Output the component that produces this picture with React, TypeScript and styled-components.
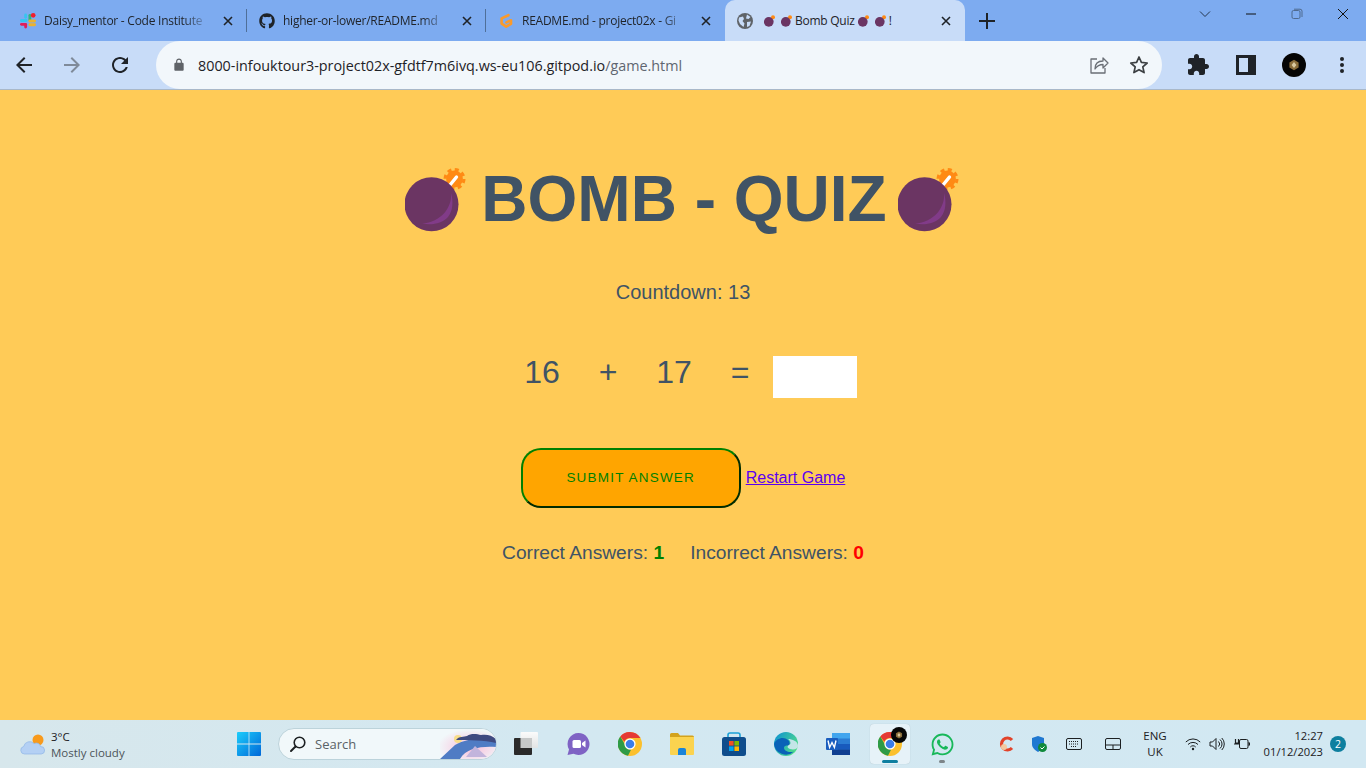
import React from 'react';
import styled, { createGlobalStyle } from 'styled-components';
import { FaGithub, FaWhatsapp } from 'react-icons/fa';

const GlobalStyle = createGlobalStyle`
  html, body { margin: 0; padding: 0; height: 100%; overflow: hidden; }
  body { font-family: "Liberation Sans", Arial, sans-serif; background: #ffcb57; }
  * { box-sizing: border-box; }
`;

const uiFont = `"Open Sans", "Noto Sans", sans-serif`;

const Screen = styled.div`
  width: 1366px;
  height: 768px;
  display: flex;
  flex-direction: column;
`;

/* ---------- chrome: tabs ---------- */
const TabStrip = styled.div`
  height: 41px;
  background: #7dabf0;
  display: flex;
  padding-left: 8px;
  flex-shrink: 0;
`;

const Tab = styled.div<{ $active?: boolean; $divider?: boolean }>`
  width: ${(p) => (p.$active ? '240px' : '239px')};
  height: 41px;
  display: flex;
  align-items: center;
  padding: 0 11px 0 12px;
  gap: 8px;
  position: relative;
  background: ${(p) => (p.$active ? '#c8dcf8' : 'transparent')};
  border-radius: ${(p) => (p.$active ? '10px 10px 0 0' : '0')};
  &::after {
    content: '';
    display: ${(p) => (p.$divider ? 'block' : 'none')};
    position: absolute;
    right: 0;
    top: 9px;
    height: 23px;
    width: 1px;
    background: #4f6f99;
  }
`;

const TabTitle = styled.span<{ $fade?: boolean }>`
  flex: 1;
  font: 12px ${uiFont};
  letter-spacing: -0.25px;
  color: #1f2328;
  white-space: nowrap;
  overflow: hidden;
  display: flex;
  align-items: center;
  ${(p) =>
    p.$fade
      ? `-webkit-mask-image: linear-gradient(90deg, #000 84%, transparent 100%);
         mask-image: linear-gradient(90deg, #000 84%, transparent 100%);`
      : ''}
`;

const TabClose = styled.svg`
  width: 16px;
  height: 16px;
  flex-shrink: 0;
  margin-left: 2px;
`;

const GhostBomb = styled.svg`
  width: 11px;
  height: 12px;
  margin: 0 3px;
  flex-shrink: 0;
`;

const NewTab = styled.div`
  width: 44px;
  height: 41px;
  display: flex;
  align-items: center;
  justify-content: center;
`;

const WindowControls = styled.div`
  margin-left: auto;
  display: flex;
  height: 28px;
`;

const WindowButton = styled.div`
  width: 46px;
  height: 28px;
  display: flex;
  align-items: center;
  justify-content: center;
`;

/* ---------- chrome: toolbar ---------- */
const Toolbar = styled.div`
  height: 49px;
  background: #c8dcf8;
  display: flex;
  align-items: flex-start;
  border-bottom: 1px solid #a9b8c9;
  flex-shrink: 0;
`;

const ToolButton = styled.div`
  width: 48px;
  height: 48px;
  display: flex;
  align-items: center;
  justify-content: center;
  flex-shrink: 0;
`;

const AddressBar = styled.div`
  width: 1006px;
  height: 48px;
  margin: 0 12px;
  background: #f2f7fb;
  border-radius: 24px;
  display: flex;
  align-items: center;
  padding: 0 3px 0 16px;
`;

const Url = styled.div`
  flex: 1;
  margin-left: 12px;
  font: 14.35px ${uiFont};
  color: #1e2227;
  white-space: nowrap;
  span { color: #5f6670; }
`;

const AddressAction = styled.div`
  width: 40px;
  height: 40px;
  display: flex;
  align-items: center;
  justify-content: center;
`;

const Avatar = styled.div`
  width: 24px;
  height: 24px;
  border-radius: 50%;
  background: #050505;
  display: flex;
  align-items: center;
  justify-content: center;
`;

/* ---------- page ---------- */
const Page = styled.main`
  flex: 1;
  background: #ffcb57;
  color: #405365;
  display: flex;
  flex-direction: column;
  align-items: center;
  padding-top: 72px;
`;

const Title = styled.h1`
  margin: 0;
  height: 74px;
  padding-right: 2px;
  font-size: 64px;
  line-height: 74px;
  font-weight: 700;
  display: flex;
  align-items: center;
  white-space: nowrap;
`;

const TitleText = styled.span`
  margin: 0 11px 0 15px;
`;

const Countdown = styled.div`
  margin-top: 44px;
  font-size: 20px;
  line-height: 24px;
`;

const Equation = styled.div`
  margin-top: 52px;
  display: flex;
  align-items: flex-start;
`;

const Term = styled.div`
  width: 66px;
  font-size: 32px;
  line-height: 32px;
  text-align: center;
`;

const AnswerInput = styled.input`
  width: 84px;
  height: 42px;
  border: 0;
  padding: 0;
  background: #fff;
  outline: none;
`;

const Actions = styled.div`
  margin-top: 50px;
  display: flex;
  align-items: center;
  gap: 5px;
`;

const SubmitButton = styled.button`
  width: 220px;
  height: 60px;
  padding: 0 0 2px;
  background: orange;
  color: green;
  border: 2px outset green;
  border-radius: 20px;
  font: 13.5px "Liberation Sans", Arial, sans-serif;
  letter-spacing: 1.2px;
  text-transform: uppercase;
`;

const RestartLink = styled.a`
  font-size: 16px;
  color: #5a00f0;
  text-decoration: underline;
`;

const Score = styled.div`
  margin-top: 34px;
  display: flex;
  gap: 26px;
  font-size: 19.2px;
  line-height: 22px;
`;

const ScoreValue = styled.b<{ $tone: string }>`
  color: ${(p) => p.$tone};
`;

/* ---------- taskbar ---------- */
const Taskbar = styled.footer`
  height: 48px;
  flex-shrink: 0;
  background: linear-gradient(90deg, #d7e7ec 0%, #d3e8f1 40%, #d2e8f2 100%);
  display: flex;
  align-items: center;
`;

const Weather = styled.div`
  width: 223px;
  padding-left: 20px;
  display: flex;
  align-items: center;
  gap: 6px;
`;

const WeatherText = styled.div`
  padding-top: 1px;
  font: 11.5px/16px ${uiFont};
  color: #4c5459;
  b { display: block; font-weight: 400; color: #1c2022; }
`;

const TaskIcon = styled.div<{ $active?: boolean }>`
  width: 40px;
  height: 40px;
  margin: 0 6px;
  flex-shrink: 0;
  border-radius: 4px;
  position: relative;
  display: flex;
  align-items: center;
  justify-content: center;
  background: ${(p) => (p.$active ? '#e6f2f8' : 'transparent')};
  box-shadow: ${(p) => (p.$active ? '0 0 1px rgba(0,0,0,.2)' : 'none')};
`;

const RunningMark = styled.i<{ $active?: boolean }>`
  position: absolute;
  bottom: 1px;
  left: 50%;
  transform: translateX(-50%);
  height: 3px;
  border-radius: 2px;
  width: ${(p) => (p.$active ? '16px' : '6px')};
  background: ${(p) => (p.$active ? '#0f7fa0' : '#7d8589')};
`;

const ProfileBadge = styled.div`
  position: absolute;
  top: 3px;
  right: 3px;
  width: 16px;
  height: 16px;
  border-radius: 50%;
  background: #060606;
  display: flex;
  align-items: center;
  justify-content: center;
`;

const SearchBox = styled.div`
  width: 219px;
  height: 32px;
  margin: 0 3px 0 3px;
  border-radius: 16px;
  background: #f1f8fa;
  border: 1px solid #bcd3db;
  display: flex;
  align-items: center;
  padding-left: 10px;
  gap: 8px;
  font: 13px ${uiFont};
  color: #5a6266;
  position: relative;
  overflow: hidden;
  flex-shrink: 0;
`;

const SearchArt = styled.svg`
  position: absolute;
  right: 0;
  top: 0;
`;

const Tray = styled.div`
  margin-left: auto;
  display: flex;
  align-items: center;
  padding-right: 20px;
`;

const TrayIcon = styled.div<{ $w: number }>`
  width: ${(p) => p.$w}px;
  display: flex;
  justify-content: center;
  align-items: center;
  flex-shrink: 0;
`;

const Lang = styled.div`
  width: 44px;
  margin-right: 4px;
  text-align: center;
  font: 11.5px/16px ${uiFont};
  color: #1c2022;
`;

const Clock = styled.div`
  width: 69px;
  text-align: right;
  font: 11.2px/16px ${uiFont};
  color: #1c2022;
`;

const Notif = styled.div`
  width: 16px;
  height: 16px;
  margin-left: 7px;
  border-radius: 50%;
  background: #0e7f9f;
  color: #fff;
  font: 10.5px/16px ${uiFont};
  text-align: center;
`;

/* ---------- drawings ---------- */
const Bomb = () => (
  <svg width="61" height="65" viewBox="0 0 61 65">
    <circle cx="49.5" cy="12" r="8.4" fill="#ff8a14" />
    <circle cx="49.5" cy="12" r="9.4" fill="none" stroke="#ff8a14" strokeWidth="3.2" strokeDasharray="4 3.38" />
    <path d="M45 18 51.5 10" stroke="#fff" strokeWidth="3.4" strokeLinecap="round" />
    <circle cx="26.5" cy="37.3" r="27" fill="#6b3563" />
    <path d="M46 26C47.500 40 36 55.500 17 56.500 27 58.500 37 56.500 43 50 48 44 48.500 34 46 26Z" fill="#813b88" />
  </svg>
);

const Close = () => (
  <TabClose viewBox="0 0 16 16">
    <path d="M4 4l8 8M12 4l-8 8" stroke="#1f2328" strokeWidth="1.6" />
  </TabClose>
);

const MiniBomb = () => (
  <GhostBomb viewBox="0 0 61 65">
    <circle cx="50" cy="12" r="11" fill="#ff8a14" />
    <circle cx="26.5" cy="37.3" r="27" fill="#6b3563" />
  </GhostBomb>
);

const Slack = () => (
  <svg width="16" height="16" viewBox="0 0 17 17">
    <rect x="0" y="6.5" width="8" height="3" rx="1.5" fill="#36c5f0" />
    <rect x="4.5" y="0.5" width="3" height="5.5" rx="1.5" fill="#36c5f0" />
    <rect x="9" y="1" width="3" height="8" rx="1.5" fill="#2eb67d" />
    <circle cx="14" cy="2.5" r="2.5" fill="#f01f2d" />
    <rect x="9" y="7" width="8" height="3" rx="1.5" fill="#ecb22e" />
    <rect x="9" y="11" width="8" height="3" rx="1.5" fill="#ecb22e" />
    <rect x="4.5" y="10.5" width="3" height="6" rx="1.5" fill="#e01e5a" />
    <rect x="0" y="10.5" width="7" height="3" rx="1.5" fill="#e01e5a" />
  </svg>
);

const GitpodMark = () => (
  <svg width="16" height="16" viewBox="0 0 16 16">
    <path d="M10.5 2.2 3.6 5.4v5.2l4.6 3 4.8-2.8V7.2L8.4 9.4" fill="none" stroke="#fb9a2a" strokeWidth="2.6" strokeLinecap="round" strokeLinejoin="round" />
  </svg>
);

const Globe = () => (
  <svg width="16" height="16" viewBox="0 0 16 16">
    <circle cx="8" cy="8" r="8" fill="#5f6368" />
    <path d="M2 4.5 6 3.5l1 2.5-1.5 2 2 2.5-1 3.5L3 11 1.5 7.5zM10 1.5l3.5 2.5-2 2-2.5-.5zM10 9l4-.5-1.5 4.5-2.5 1z" fill="#c8dcf8" />
  </svg>
);

const Mat = ({ d, fill, size = 24 }: { d: string; fill: string; size?: number }) => (
  <svg width={size} height={size} viewBox="0 0 24 24">
    <path d={d} fill={fill} />
  </svg>
);

const ChromeLogo = ({ size }: { size: number }) => (
  <svg width={size} height={size} viewBox="0 0 24 24">
    <circle cx="12" cy="12" r="12" fill="#fbc02d" />
    <path d="M12 0a12 12 0 0 1 10.4 6H12a6 6 0 0 0-5.6 3.7L2.3 4.5A12 12 0 0 1 12 0Z" fill="#e53935" />
    <path d="M2.3 4.5 7 12.8a5.8 5.8 0 0 0 6 4.9L10 23.8A12 12 0 0 1 2.3 4.5Z" fill="#2e9b47" />
    <circle cx="12" cy="12" r="5.6" fill="#fff" />
    <circle cx="12" cy="12" r="4.3" fill="#3b7de8" />
  </svg>
);

const ProfileMark = ({ size }: { size: number }) => (
  <svg width={size} height={size} viewBox="0 0 12 12">
    <path d="M6 .8 10.6 3.4v5.2L6 11.2 1.4 8.6V3.4Z" fill="#8a6d3a" />
    <path d="M6 3 8.4 6 6 9 3.6 6Z" fill="#d9c9a0" />
  </svg>
);

const WIN_BLUE = (
  <svg width="24" height="24" viewBox="0 0 24 24">
    <defs>
      <linearGradient id="winTile" x1="0" y1="0" x2="1" y2="1">
        <stop offset="0" stopColor="#1ccdfb" />
        <stop offset="1" stopColor="#0067d8" />
      </linearGradient>
    </defs>
    <path d="M1 0h10.6v11.6H0V1a1 1 0 0 1 1-1ZM12.4 0H23a1 1 0 0 1 1 1v10.6H12.4ZM0 12.4h11.6V24H1a1 1 0 0 1-1-1ZM12.4 12.4H24V23a1 1 0 0 1-1 1H12.4Z" fill="url(#winTile)" />
  </svg>
);

const TaskView = () => (
  <svg width="24" height="24" viewBox="0 0 24 24">
    <defs>
      <linearGradient id="tvBack" x1="0" y1="0" x2="0" y2="1">
        <stop offset="0" stopColor="#fbfbfb" />
        <stop offset="1" stopColor="#e2e4e4" />
      </linearGradient>
    </defs>
    <rect x="6.500" y="0" width="17.500" height="16" rx="1" fill="url(#tvBack)" />
    <rect x="0" y="6" width="18" height="17" rx="1" fill="#2a2a2a" />
    <rect x="6.500" y="6" width="11.500" height="10" fill="#c6c8c8" />
  </svg>
);

const TeamsChat = () => (
  <svg width="24" height="24" viewBox="0 0 24 24">
    <path d="M12.5 1a11 11 0 1 1-5 20.8L1.5 23 3 17.5A11 11 0 0 1 12.5 1Z" fill="#7f63c4" />
    <rect x="6.500" y="8" width="8.500" height="8" rx="1.500" fill="#fff" />
    <path d="m16 11 3.500-2.500v7L16 13Z" fill="#fff" />
  </svg>
);

const Folder = () => (
  <svg width="24" height="24" viewBox="0 0 24 24">
    <path d="M0 2.5A1.5 1.5 0 0 1 1.5 1H8l2 2.5h12.5A1.5 1.5 0 0 1 24 5v3H0Z" fill="#d3a21d" />
    <path d="M0 5h24v17a1 1 0 0 1-1 1H1a1 1 0 0 1-1-1Z" fill="#fbd34f" />
    <path d="M8 18a2 2 0 0 1 2-2h4a2 2 0 0 1 2 2v5H8Z" fill="#1a84d8" />
  </svg>
);

const Store = () => (
  <svg width="24" height="24" viewBox="0 0 24 24">
    <path d="M6 6V3a2 2 0 0 1 2-2h8a2 2 0 0 1 2 2v3" fill="none" stroke="#1ba1d8" strokeWidth="1.6" />
    <rect x="0" y="5" width="24" height="19" rx="2.5" fill="#0f4d8c" />
    <rect x="7" y="9" width="4.6" height="4.6" fill="#f25022" />
    <rect x="12.4" y="9" width="4.6" height="4.6" fill="#7fba00" />
    <rect x="7" y="14.4" width="4.6" height="4.6" fill="#00a4ef" />
    <rect x="12.4" y="14.4" width="4.6" height="4.6" fill="#ffb900" />
  </svg>
);

const Edge = () => (
  <svg width="24" height="24" viewBox="0 0 24 24">
    <defs>
      <linearGradient id="edgeTop" x1="0" y1="0" x2="1" y2="0.6">
        <stop offset="0" stopColor="#0c8fd6" />
        <stop offset="1" stopColor="#4fdc8b" />
      </linearGradient>
    </defs>
    <circle cx="12" cy="12" r="12" fill="url(#edgeTop)" />
    <path d="M0 12C2 6 10 4 14 8c2 2 2 4 1 5-2 1-5 0-5 3 0 3 5 5 10 3.5A12 12 0 0 1 0 12Z" fill="#0a62b8" />
    <path d="M24 14c0 3-4 4-8 3-3-1-3-3-1-4 3-1 1-5-1-6 4 0 10 2 10 7Z" fill="#d3e8f1" opacity=".9" />
  </svg>
);

const Word = () => (
  <svg width="24" height="24" viewBox="0 0 24 24">
    <rect x="6" y="1" width="18" height="22" rx="1" fill="#2b7cd3" />
    <rect x="6" y="1" width="18" height="5.5" fill="#41a5ee" />
    <rect x="6" y="12" width="18" height="5.5" fill="#185abd" />
    <rect x="6" y="17.5" width="18" height="5.5" fill="#103f91" />
    <rect x="0" y="6" width="12" height="12" rx="1" fill="#1a5dbe" />
    <path d="M2 8.5 3.6 15.5 6 10.5 8.4 15.5 10 8.5" fill="none" stroke="#fff" strokeWidth="1.4" />
  </svg>
);

const Cloud = () => (
  <svg width="25" height="21" viewBox="0 0 25 21">
    <circle cx="18" cy="6" r="5.5" fill="#f89a1c" />
    <path d="M4.500 20a3.800 3.800 0 0 1-.8-7.500A6 6 0 0 1 14 9.600a4.400 4.400 0 0 1 6.600 3 3.700 3.700 0 0 1 .6 7.400Z" fill="#b4d0f4" stroke="#8fb6e6" strokeWidth=".7" />
  </svg>
);

const App = () => (
  <Screen>
    <GlobalStyle />
    <TabStrip>
      <Tab $divider>
        <Slack />
        <TabTitle $fade>Daisy_mentor - Code Institute</TabTitle>
        <Close />
      </Tab>
      <Tab $divider>
        <FaGithub size={16} color="#1f2328" />
        <TabTitle $fade>higher-or-lower/README.md</TabTitle>
        <Close />
      </Tab>
      <Tab>
        <GitpodMark />
        <TabTitle $fade>README.md - project02x - Gi</TabTitle>
        <Close />
      </Tab>
      <Tab $active>
        <Globe />
        <TabTitle>
          <MiniBomb />
          <MiniBomb />
          Bomb Quiz
          <MiniBomb />
          <MiniBomb />
          !
        </TabTitle>
        <Close />
      </Tab>
      <NewTab>
        <Mat d="M11 4h2v7h7v2h-7v7h-2v-7H4v-2h7z" fill="#1f2328" />
      </NewTab>
      <WindowControls>
        <WindowButton>
          <svg width="12" height="12" viewBox="0 0 12 12">
            <path d="M1 3.5 6 8.500l5-5" fill="none" stroke="#26364d" />
          </svg>
        </WindowButton>
        <WindowButton>
          <svg width="12" height="12" viewBox="0 0 12 12">
            <path d="M1 6h10" stroke="#111" />
          </svg>
        </WindowButton>
        <WindowButton>
          <svg width="12" height="12" viewBox="0 0 12 12">
            <rect x="1" y="2.500" width="8" height="8" rx="1.500" fill="none" stroke="#4f6a8f" />
            <path d="M3 1.200h6a2 2 0 0 1 2 2V9" fill="none" stroke="#4f6a8f" />
          </svg>
        </WindowButton>
        <WindowButton>
          <svg width="12" height="12" viewBox="0 0 12 12">
            <path d="M1 1l10 10M11 1 1 11" stroke="#111" />
          </svg>
        </WindowButton>
      </WindowControls>
    </TabStrip>

    <Toolbar>
      <ToolButton>
        <Mat d="M20 11H7.83l5.59-5.59L12 4l-8 8 8 8 1.41-1.41L7.83 13H20v-2z" fill="#1f2328" />
      </ToolButton>
      <ToolButton>
        <Mat d="M4 11h12.17l-5.59-5.59L12 4l8 8-8 8-1.41-1.41L16.17 13H4v-2z" fill="#7f8a99" />
      </ToolButton>
      <ToolButton>
        <Mat
          d="M17.65 6.35C16.2 4.9 14.21 4 12 4c-4.42 0-7.99 3.58-7.99 8s3.57 8 7.99 8c3.73 0 6.84-2.55 7.73-6h-2.08c-.82 2.33-3.04 4-5.65 4-3.31 0-6-2.69-6-6s2.69-6 6-6c1.66 0 3.14.69 4.22 1.78L13 11h7V4l-2.35 2.35z"
          fill="#1f2328"
        />
      </ToolButton>
      <AddressBar>
        <Mat
          size={14}
          d="M18 8h-1V6c0-2.76-2.24-5-5-5S7 3.24 7 6v2H6c-1.1 0-2 .9-2 2v10c0 1.1.9 2 2 2h12c1.1 0 2-.9 2-2V10c0-1.1-.9-2-2-2zM9 6c0-1.66 1.34-3 3-3s3 1.34 3 3v2H9V6z"
          fill="#5f6368"
        />
        <Url>
          8000-infouktour3-project02x-gfdtf7m6ivq.ws-eu106.gitpod.io<span>/game.html</span>
        </Url>
        <AddressAction>
          <svg width="20" height="20" viewBox="0 0 20 20">
            <path d="M8 4H2v14h14v-5M6 14c0-5 3-8 8-8V3l5 5-5 5V9.500c-4 0-6 1.500-8 4.500Z" fill="none" stroke="#6a6f76" strokeWidth="1.3" strokeLinejoin="round" />
          </svg>
        </AddressAction>
        <AddressAction>
          <svg width="20" height="20" viewBox="0 0 20 20">
            <path d="m10 2 2.400 5.400 5.800.6-4.400 3.900 1.300 5.700L10 14.700l-5.100 2.900 1.300-5.700L1.800 8l5.800-.6Z" fill="none" stroke="#3c4043" strokeWidth="1.700" strokeLinejoin="round" />
          </svg>
        </AddressAction>
      </AddressBar>
      <ToolButton>
        <Mat
          d="M20.5 11H19V7c0-1.100-.9-2-2-2h-4V3.500C13 2.120 11.880 1 10.500 1S8 2.120 8 3.500V5H4c-1.100 0-1.990.9-1.990 2v3.800H3.500c1.490 0 2.700 1.210 2.700 2.700s-1.210 2.700-2.700 2.700H2V20c0 1.100.9 2 2 2h3.800v-1.500c0-1.490 1.210-2.700 2.700-2.700 1.490 0 2.700 1.210 2.700 2.700V22H17c1.100 0 2-.9 2-2v-4h1.500c1.380 0 2.500-1.120 2.500-2.500S21.880 11 20.500 11z"
          fill="#1f2328"
        />
      </ToolButton>
      <ToolButton>
        <svg width="20" height="20" viewBox="0 0 20 20">
          <path d="M0 0h20v20H0Zm3 3v14h9V3Z" fill="#1f2328" fillRule="evenodd" />
        </svg>
      </ToolButton>
      <ToolButton>
        <Avatar>
          <ProfileMark size={12} />
        </Avatar>
      </ToolButton>
      <ToolButton>
        <svg width="6" height="20" viewBox="0 0 6 20">
          <circle cx="3" cy="4" r="2" fill="#1f2328" />
          <circle cx="3" cy="10" r="2" fill="#1f2328" />
          <circle cx="3" cy="16" r="2" fill="#1f2328" />
        </svg>
      </ToolButton>
    </Toolbar>

    <Page>
      <Title>
        <Bomb />
        <TitleText>BOMB - QUIZ</TitleText>
        <Bomb />
      </Title>
      <Countdown>Countdown: 13</Countdown>
      <Equation>
        <Term>16</Term>
        <Term>+</Term>
        <Term>17</Term>
        <Term>=</Term>
        <AnswerInput type="text" />
      </Equation>
      <Actions>
        <SubmitButton>Submit Answer</SubmitButton>
        <RestartLink href="#">Restart Game</RestartLink>
      </Actions>
      <Score>
        <span>
          Correct Answers: <ScoreValue $tone="green">1</ScoreValue>
        </span>
        <span>
          Incorrect Answers: <ScoreValue $tone="red">0</ScoreValue>
        </span>
      </Score>
    </Page>

    <Taskbar>
      <Weather>
        <Cloud />
        <WeatherText>
          <b>3°C</b>
          Mostly cloudy
        </WeatherText>
      </Weather>
      <TaskIcon>{WIN_BLUE}</TaskIcon>
      <SearchBox>
        <svg width="18" height="18" viewBox="0 0 18 18">
          <circle cx="10.500" cy="7.500" r="5.300" fill="none" stroke="#1c2022" strokeWidth="1.600" />
          <path d="M6.500 11.500 2 16" stroke="#1c2022" strokeWidth="2" strokeLinecap="round" />
        </svg>
        Search
        <SearchArt width="56" height="30" viewBox="0 0 56 30">
          <defs>
            <radialGradient id="glow" cx="0.55" cy="0.6" r="0.6">
              <stop offset="0" stopColor="#f9bcd8" />
              <stop offset="1" stopColor="#f1f8fa" />
            </radialGradient>
          </defs>
          <rect width="56" height="30" fill="url(#glow)" />
          <circle cx="18" cy="10" r="4" fill="#f7dd8a" />
          <path d="M0 30 15 16c10-6 26-8 41-6v8c-14-1-30 1-36 12Z" fill="#4f7cc4" />
          <path d="M16 11c3-4 8-3 11-4 4-3 10-2 14-1 5-1 11 0 15 4v4c-12-3-28-3-40-3Z" fill="#3f4a80" />
          <path d="M26 28l9-11 12 11Z" fill="#c2b4dc" />
        </SearchArt>
      </SearchBox>
      <TaskIcon>
        <TaskView />
      </TaskIcon>
      <TaskIcon>
        <TeamsChat />
      </TaskIcon>
      <TaskIcon>
        <ChromeLogo size={24} />
      </TaskIcon>
      <TaskIcon>
        <Folder />
      </TaskIcon>
      <TaskIcon>
        <Store />
      </TaskIcon>
      <TaskIcon>
        <Edge />
      </TaskIcon>
      <TaskIcon>
        <Word />
      </TaskIcon>
      <TaskIcon $active>
        <ChromeLogo size={24} />
        <ProfileBadge>
          <ProfileMark size={8} />
        </ProfileBadge>
        <RunningMark $active />
      </TaskIcon>
      <TaskIcon>
        <FaWhatsapp size={25} color="#18b85a" />
        <RunningMark />
      </TaskIcon>
      <Tray>
        <TrayIcon $w={30}>
          <svg width="16" height="16" viewBox="0 0 16 16">
            <path d="M13 4a6 6 0 1 0 0 8" fill="none" stroke="#e2432a" strokeWidth="3.200" />
            <circle cx="5" cy="11" r="3" fill="#f3c9a0" />
          </svg>
        </TrayIcon>
        <TrayIcon $w={34}>
          <svg width="16" height="16" viewBox="0 0 16 16">
            <path d="M7 0 13 2v6c0 4-3 6-6 8-3-2-6-4-6-8V2Z" fill="#1f78d1" />
            <circle cx="11.500" cy="11.500" r="4.500" fill="#0f8a3c" />
            <path d="m9.500 11.500 1.500 1.500 2.500-2.500" fill="none" stroke="#fff" />
          </svg>
        </TrayIcon>
        <TrayIcon $w={36}>
          <svg width="16" height="12" viewBox="0 0 16 12">
            <rect x=".5" y=".5" width="15" height="11" rx="1.500" fill="none" stroke="#1c2022" />
            <path d="M3 3.500h10M3 6h10M5 8.500h6" stroke="#1c2022" strokeDasharray="1 1" />
          </svg>
        </TrayIcon>
        <TrayIcon $w={41}>
          <svg width="16" height="12" viewBox="0 0 16 12">
            <rect x=".5" y=".5" width="15" height="11" rx="1.500" fill="none" stroke="#1c2022" />
            <path d="M.5 7h15M8 7v4.500" stroke="#1c2022" />
          </svg>
        </TrayIcon>
        <Lang>
          ENG
          <br />
          UK
        </Lang>
        <TrayIcon $w={24}>
          <svg width="16" height="14" viewBox="0 0 16 14">
            <path d="M.8 5a10 10 0 0 1 14.400 0M3 7.500a7 7 0 0 1 10 0M5.300 10a3.600 3.600 0 0 1 5.400 0" fill="none" stroke="#1c2022" />
            <circle cx="8" cy="12" r="1.200" fill="#1c2022" />
          </svg>
        </TrayIcon>
        <TrayIcon $w={24}>
          <svg width="16" height="14" viewBox="0 0 16 14">
            <path d="M1 5h2.500L7 1.500v11L3.500 9H1ZM9.500 4.500a3.500 3.500 0 0 1 0 5M11 2.500a6 6 0 0 1 0 9M12.800 1a8.500 8.500 0 0 1 0 12" fill="none" stroke="#1c2022" />
          </svg>
        </TrayIcon>
        <TrayIcon $w={25}>
          <svg width="16" height="14" viewBox="0 0 16 14">
            <rect x="5.500" y="2.500" width="8.500" height="9" rx="1.500" fill="none" stroke="#1c2022" />
            <path d="M14 6h1.500v2H14M0 7h5M1.500 2v4h3V2" fill="none" stroke="#1c2022" strokeWidth="1.200" />
          </svg>
        </TrayIcon>
        <Clock>
          12:27
          <br />
          01/12/2023
        </Clock>
        <Notif>2</Notif>
      </Tray>
    </Taskbar>
  </Screen>
);

export default App;
